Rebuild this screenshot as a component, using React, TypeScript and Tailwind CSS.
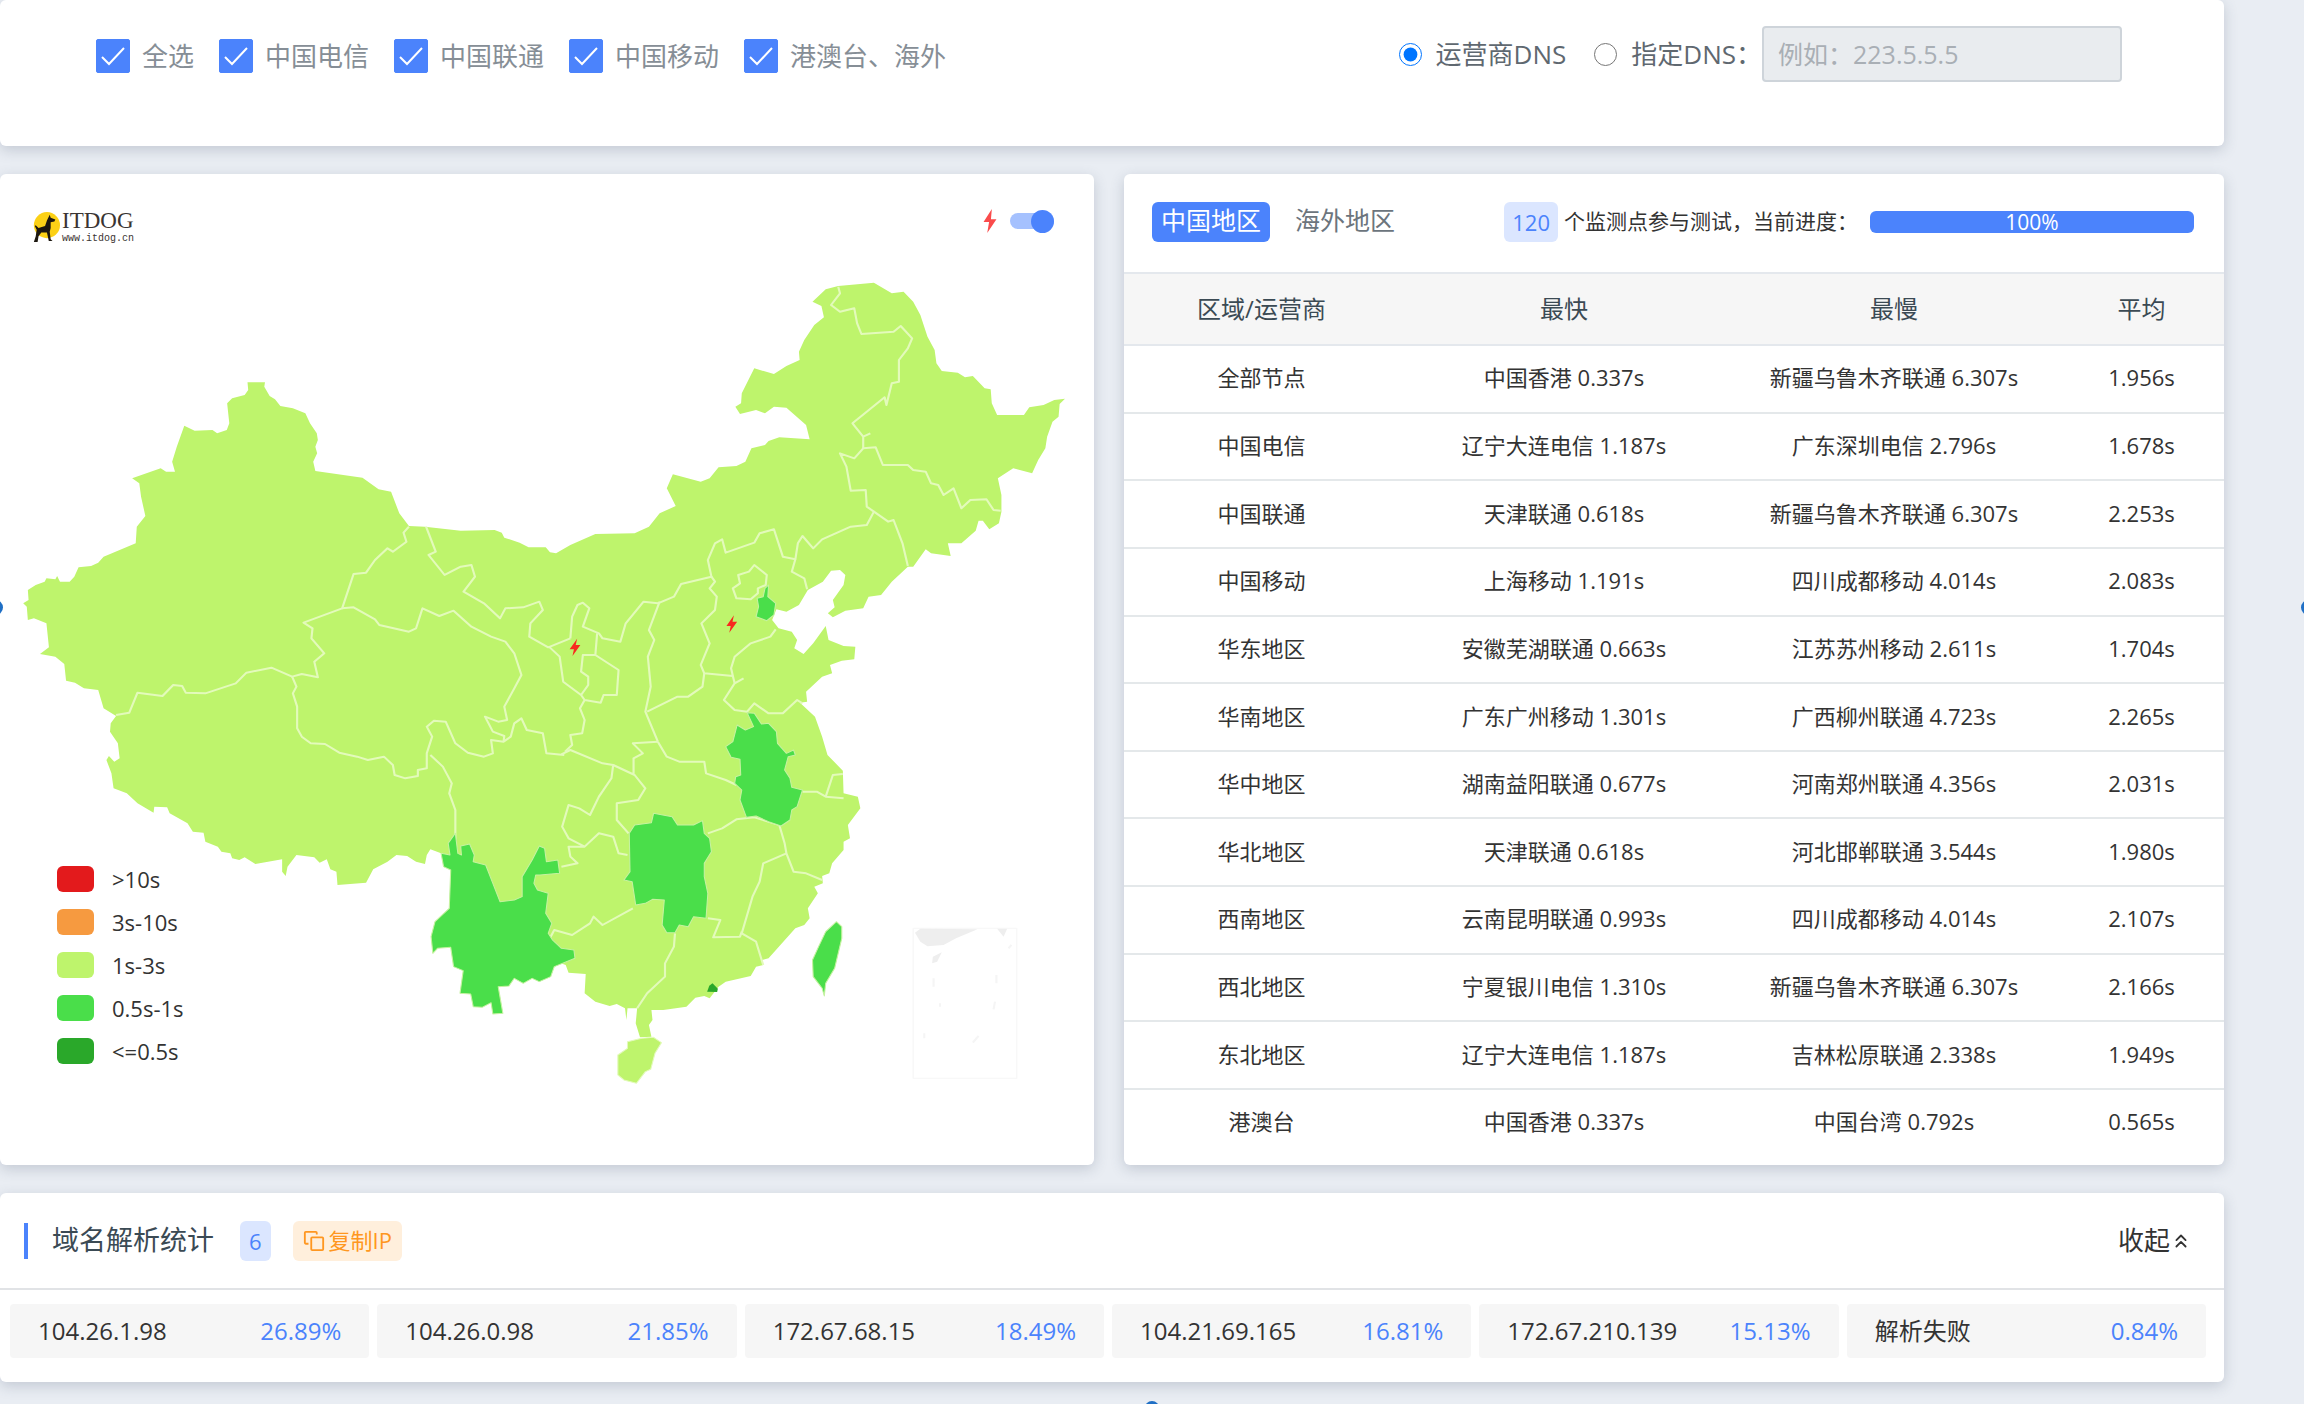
import { useState } from "react";

// Icon
import { ChevronsUp } from "lucide-react";

// ========================================================================================================

const carriers = ["全选", "中国电信", "中国联通", "中国移动", "港澳台、海外"];

const rows = [
  ["全部节点", "中国香港 0.337s", "新疆乌鲁木齐联通 6.307s", "1.956s"],
  ["中国电信", "辽宁大连电信 1.187s", "广东深圳电信 2.796s", "1.678s"],
  ["中国联通", "天津联通 0.618s", "新疆乌鲁木齐联通 6.307s", "2.253s"],
  ["中国移动", "上海移动 1.191s", "四川成都移动 4.014s", "2.083s"],
  ["华东地区", "安徽芜湖联通 0.663s", "江苏苏州移动 2.611s", "1.704s"],
  ["华南地区", "广东广州移动 1.301s", "广西柳州联通 4.723s", "2.265s"],
  ["华中地区", "湖南益阳联通 0.677s", "河南郑州联通 4.356s", "2.031s"],
  ["华北地区", "天津联通 0.618s", "河北邯郸联通 3.544s", "1.980s"],
  ["西南地区", "云南昆明联通 0.993s", "四川成都移动 4.014s", "2.107s"],
  ["西北地区", "宁夏银川电信 1.310s", "新疆乌鲁木齐联通 6.307s", "2.166s"],
  ["东北地区", "辽宁大连电信 1.187s", "吉林松原联通 2.338s", "1.949s"],
  ["港澳台", "中国香港 0.337s", "中国台湾 0.792s", "0.565s"],
];

const legend = [
  { label: ">10s", color: "bg-[#e31a1c]" },
  { label: "3s-10s", color: "bg-[#f69a40]" },
  { label: "1s-3s", color: "bg-[#bef46c]" },
  { label: "0.5s-1s", color: "bg-[#4ade4a]" },
  { label: "<=0.5s", color: "bg-[#2aa82a]" },
];

const results = [
  { ip: "104.26.1.98", percent: "26.89%" },
  { ip: "104.26.0.98", percent: "21.85%" },
  { ip: "172.67.68.15", percent: "18.49%" },
  { ip: "104.21.69.165", percent: "16.81%" },
  { ip: "172.67.210.139", percent: "15.13%" },
  { ip: "解析失败", percent: "0.84%" },
];

const CARD = "bg-white rounded-md shadow-[0_4px_14px_rgba(60,72,100,0.22)]";

// =====================================================
//  Map
// =====================================================
function Bolt({ x, y }: { x: number; y: number }) {
  return (
    <path
      transform={`translate(${x} ${y})`}
      d="M6-26L-15 6H-3L-7 26L15-7H2Z"
      fill="#f8291f"
    />
  );
}

function ChinaMap() {
  return (
    <svg viewBox="0 0 1094 860" className="block w-full" role="img" aria-label="中国地图">
      <g transform="scale(0.35714 0.33333)" strokeLinejoin="round">
        {/* Mainland */}
        <path
          fill="#bef46c"
          d="M65 1030L80 1020 78 990 100 975 125 965 130 955 155 958 160 948 168 965 195 965 208 950 220 922 255 918 275 908 290 890 380 850 383 800 407 768 395 710 390 670 370 655 450 625 465 635 490 635 482 605 495 560 516 497 545 512 595 510 608 520 635 510 642 490 636 430 650 415 685 405 695 390 693 367 742 367 740 380 755 408 770 418 785 438 820 445 855 460 868 490 887 520 890 540 883 560 888 580 877 605 883 633 1015 653 1060 688 1095 695 1118 760 1145 798 1190 800 1290 812 1385 810 1405 818 1412 833 1455 848 1480 862 1528 862 1540 877 1557 880 1597 855 1667 822 1777 820 1817 800 1847 760 1892 738 1867 685 1884 643 1962 665 1987 655 2012 622 2062 618 2087 605 2104 565 2142 555 2152 543 2182 532 2267 538 2257 495 2202 443 2167 440 2142 460 2117 450 2072 462 2059 440 2075 430 2077 400 2112 325 2167 342 2202 318 2239 300 2237 275 2252 240 2280 195 2307 172 2300 138 2275 125 2312 88 2347 78 2447 68 2497 100 2530 95 2557 125 2577 165 2597 230 2617 270 2622 310 2637 333 2682 338 2702 352 2724 348 2757 385 2774 388 2777 430 2792 465 2867 465 2882 442 2922 435 2952 420 2982 416 2967 432 2964 470 2947 485 2932 530 2927 565 2907 600 2890 640 2837 625 2794 655 2804 705 2804 755 2797 790 2770 808 2752 782 2740 782 2732 812 2692 850 2654 850 2662 888 2607 880 2592 868 2557 920 2542 920 2497 965 2467 1005 2432 1010 2417 1045 2367 1052 2332 1072 2318 1060 2337 1042 2332 1020 2362 975 2367 945 2352 930 2327 932 2304 965 2262 990 2237 1035 2202 1055 2174 1048 2162 1080 2180 1105 2217 1115 2232 1140 2224 1165 2250 1182 2277 1150 2312 1098 2320 1140 2362 1158 2395 1160 2392 1198 2357 1202 2324 1215 2330 1240 2302 1250 2257 1295 2260 1325 2240 1328 2282 1370 2302 1430 2317 1485 2360 1532 2362 1600 2402 1610 2409 1645 2374 1695 2380 1735 2362 1745 2362 1770 2330 1810 2322 1840 2302 1848 2304 1870 2280 1880 2290 1900 2262 1945 2267 1975 2252 1995 2227 2005 2152 2095 2134 2100 2137 2115 2117 2120 2102 2148 2032 2165 2012 2180 1987 2215 1972 2208 1947 2213 1922 2240 1857 2250 1824 2250 1827 2280 1817 2295 1824 2330 1792 2332 1780 2290 1784 2245 1757 2245 1754 2280 1750 2245 1727 2232 1707 2238 1667 2225 1637 2200 1640 2142 1592 2138 1584 2115 1545 2100 1262 1940 1262 1830 1235 1780 1205 1768 1195 1785 1190 1812 1165 1805 1140 1788 1110 1785 1085 1805 1045 1828 1025 1868 945 1875 942 1835 925 1828 915 1798 895 1808 880 1792 830 1785 805 1820 800 1848 790 1835 790 1798 715 1812 685 1792 670 1800 650 1795 645 1780 620 1775 610 1760 575 1745 570 1718 540 1715 525 1690 475 1660 468 1642 432 1640 430 1658 385 1630 355 1600 318 1585 312 1540 298 1500 305 1488 320 1505 335 1495 330 1450 308 1415 310 1390 325 1368 290 1345 275 1290 235 1285 210 1268 185 1262 180 1212 155 1190 112 1182 137 1162 130 1090 95 1075 78 1080 75 1040Z"
        />

        {/* North west borders */}
        <g fill="none" stroke="#e3fabb" strokeWidth="6">
          <path d="M1145 800L1130 818 1138 845 1100 875 1085 865 1050 900 1025 938 990 942 958 1045 850 1088 875 1105 872 1135 908 1180 880 1205 890 1252 845 1242 818 1250 760 1223 690 1238 660 1270 575 1300 520 1298 510 1278 485 1275 455 1308 385 1298 362 1358 325 1365" />
          <path d="M818 1250L830 1280 820 1300 832 1340 832 1405 845 1430 870 1450 910 1452 950 1478 1000 1490 1030 1500 1075 1490 1100 1515 1105 1545 1135 1555 1170 1548 1170 1530 1195 1525 1195 1480 1210 1430 1195 1400 1215 1382 1248 1385 1275 1450 1310 1478 1355 1490 1380 1480 1375 1440 1410 1445 1430 1430 1440 1390 1460 1375 1475 1410 1520 1420 1530 1480 1580 1485" />
          <path d="M1410 1445L1412 1428 1380 1415 1358 1370 1395 1385 1420 1380 1412 1340 1440 1285 1460 1245 1440 1180 1415 1145 1375 1130 1320 1100 1270 1052 1230 1068 1183 1045 1165 1105 1145 1115 1062 1095 1050 1078 990 1042 958 1045" />
          <path d="M1193 800L1220 875 1200 885 1245 945 1290 920 1320 915 1330 950 1298 995 1355 1030 1400 1075 1415 1045 1465 1042 1510 1025 1520 1050 1485 1090 1482 1130 1535 1162 1597 1135" />
          <path d="M1205 1485L1240 1520 1265 1570 1258 1600 1275 1650 1275 1740" />
        </g>

        {/* North east borders */}
        <g transform="translate(1512 0)" fill="none" stroke="#e3fabb" strokeWidth="6">
          <path d="M85 1135L90 1070 105 1035 120 1028 138 1045 120 1100 165 1120 175 1135 225 1145 240 1090 290 1025 330 1030 375 1010 395 972 480 950 470 900 490 850 510 838 520 878 600 848 615 820 655 808 680 890 715 898 722 850 735 828 765 865 790 838 870 800 915 795 935 755 915 740 912 690 870 692 858 620 840 580 880 595 905 565 940 562 960 615 1030 615 1045 630 1080 635 1095 670 1115 675 1130 705 1158 685 1180 745 1205 720 1250 718 1270 750 1290 752" />
          <path d="M905 565L905 530 925 520M905 530L875 490 965 412 970 435 985 370 1005 365 1005 300 1030 265 1042 235 1010 198 990 215 900 222 888 190 880 145 840 155 815 135 840 100 835 80" />
          <path d="M935 755L975 785 990 780 1015 850 1030 918M715 898L705 935 740 955 748 988" />
          <path d="M480 950L490 965 475 985 495 1010 490 1050 452 1090 475 1150 450 1215 460 1240 540 1248 535 1225 545 1190 590 1150 645 1130 660 1108" />
          <path d="M600 915L635 945 632 975 610 985 610 1000 590 1018 550 1015 540 985 560 970 555 945 585 935Z" />
          <path d="M335 1025L305 1110 320 1140 302 1190 310 1280 295 1355 330 1445M300 1355L385 1310 415 1310 455 1280 460 1240" />
          <path d="M25 1160L55 1190 65 1265 115 1305 135 1275 135 1250 115 1235 120 1185 155 1185 160 1120M155 1185L220 1230 215 1305 178 1305 170 1328 125 1320 112 1345 125 1380 118 1420 85 1425 90 1455 70 1475M115 1305L125 1320" />
          <path d="M540 1248L545 1270 570 1255M545 1270L515 1320 545 1350 580 1355 600 1330 640 1360 680 1360 720 1320 735 1330" />
        </g>

        {/* Southern borders */}
        <g transform="translate(1512 1320)" fill="none" stroke="#e3fabb" strokeWidth="6">
          <path d="M60 163L85 150 175 190 205 195 200 235 165 290 140 345 110 325 80 315 62 380 80 415 125 440 165 400 205 410 220 460 245 465M125 440L80 440 85 470 105 490 60 500" />
          <path d="M205 195L265 225 295 265 275 300 215 310 215 360 248 400M330 125L260 130 288 160 262 175 262 225" />
          <path d="M330 125L355 170 390 185 460 185 465 220 520 240 550 255M470 400L510 385 550 358 600 352 670 375 685 430 690 460 710 515 745 520 790 540" />
          <path d="M690 460L625 490 615 545 595 590 565 700 605 725 625 795M470 655L505 660 485 712 560 710 565 695" />
          <path d="M378 700L375 740 350 790 350 830 300 880 272 925M25 720L40 690 90 705 140 670 150 650 175 675 260 625" />
          <path d="M735 275L775 275 800 290 850 295M800 290L820 225 848 222" />
        </g>

        {/* Faster provinces */}
        <g fill="#4ade4a" stroke="#c5f2a0" strokeWidth="3">
          <path
            transform="translate(0 1320)"
            d="M1275 400L1282 460 1292 465 1290 438 1315 432 1328 465 1325 485 1360 495 1380 550 1400 605 1440 600 1462 590 1462 530 1490 480 1510 438 1525 445 1530 485 1562 480 1567 520 1512 525 1500 525 1495 550 1505 570 1535 580 1528 640 1545 670 1535 700 1547 720 1572 745 1607 750 1610 775 1552 800 1542 830 1510 845 1490 835 1465 850 1440 835 1425 858 1395 860 1408 940 1380 942 1375 908 1350 922 1325 920 1318 882 1288 880 1297 812 1270 800 1262 742 1225 745 1212 760 1207 710 1218 665 1258 625 1262 510 1242 500 1235 460 1260 465 1255 430Z"
          />
          <g transform="translate(1512 1320)">
            <path d="M250 400L265 375 312 368 318 340 370 350 385 375 430 375 455 362 460 400 475 415 480 455 460 490 460 530 470 580 465 655 430 650 415 680 390 675 378 698 355 698 342 675 348 600 315 598 295 610 268 615 258 545 235 540 252 515Z" />
            <path d="M580 38L600 40 620 72 640 70 662 95 665 130 690 160 710 150 715 165 695 170 685 210 700 235 705 262 735 270 720 320 705 330 700 360 675 378 640 365 605 348 578 352 560 300 565 270 545 250 548 230 562 225 560 178 535 172 520 140 540 125 552 75 575 90 598 80Z" />
            <path d="M830 665L845 680 845 715 825 805 800 850 796 888 790 865 765 830 763 780 780 740 800 695Z" />
          </g>
          <path
            transform="translate(1512 0)"
            d="M630 985L640 975 638 1010 660 1030 655 1065 635 1082 605 1070 612 1040 608 1015 625 1010Z"
          />
        </g>

        {/* Hainan, Hong Kong and the south sea inset */}
        <g transform="translate(1512 1320)">
          <path
            fill="#bef46c"
            stroke="#e3fabb"
            strokeWidth="3"
            d="M245 1025L285 1015 318 1012 340 1028 322 1060 310 1108 295 1115 270 1150 235 1140 218 1125 218 1065 245 1045Z"
          />
          <path fill="#2aa82a" d="M468 875L474 857 483 850 498 866 496 876Z" />
          <rect x="1045" y="685" width="290" height="450" fill="none" stroke="#f8f8f8" strokeWidth="4" />
          <path fill="#eeeeee" d="M1050 698L1065 686 1225 688 1165 715 1130 735 1085 739 1065 725ZM1280 686H1308L1298 710ZM1100 770L1125 757 1112 785 1098 790Z" />
          <path
            stroke="#f5f5f5"
            strokeWidth="6"
            d="M1320 735L1312 745M1278 825V850M1274 905L1270 928M1228 1008L1212 1028M1102 835V860M1120 910V920M1076 1000V1015"
          />
        </g>

        <Bolt x={2049} y={1092} />
        <Bolt x={1610} y={1162} />
      </g>
    </svg>
  );
}

// =====================================================
//  Logo
// =====================================================
function Logo() {
  return (
    <div className="mt-3 flex items-center gap-0.5">
      <svg viewBox="0 0 30 34" className="h-8 w-7">
        <circle cx="16" cy="15" r="14" fill="#fcd116" />
        <path
          fill="#1c1710"
          d="M19 4L20 7 25 9 24 11 20 12 20 18 19 22 20 30 22 32H18L16 23 10 23 7 27 6 33H2L4 27 5 20 3 16 4 15 7 18 14 16 16 10Z"
        />
      </svg>
      <div className="text-[#3a3432]">
        <div className="text-[23px] leading-6 font-['Liberation_Serif',serif]">ITDOG</div>
        <div className="text-[10px] leading-3 font-['Liberation_Mono',monospace]">www.itdog.cn</div>
      </div>
    </div>
  );
}

// ========================================================================================================

export default function App() {
  const [checked, setChecked] = useState(carriers.map(() => true));
  const [dns, setDns] = useState("carrier");
  const [region, setRegion] = useState("中国地区");
  const [lightning, setLightning] = useState(true);

  // =====================================================
  //  Event
  // =====================================================
  const toggleCarrier = (index: number) => {
    if (index === 0) {
      setChecked(checked.map(() => !checked[0]));
      return;
    }
    setChecked(checked.map((value, i) => (i === index ? !value : value)));
  };

  return (
    <div className="relative min-h-screen overflow-hidden bg-[#e9edf3] pr-20 text-[#333] font-['Open_Sans','Noto_Sans_CJK_SC',sans-serif]">
      <div className="flex flex-col gap-7">
        {/* Filters */}
        <section className={`${CARD} flex h-[146px] items-start justify-between pt-[26px] pl-24 pr-[102px]`}>
          <div className="flex h-15 items-center gap-[25px] text-[26px] text-[#868e96]">
            {carriers.map((name, index) => (
              <label key={name} className="flex items-center gap-3">
                <span className="relative h-[34px] w-[34px]">
                  <input
                    type="checkbox"
                    checked={checked[index]}
                    onChange={() => toggleCarrier(index)}
                    className="peer block h-full w-full appearance-none rounded-xs border border-[#4b83fc] checked:bg-[#4b83fc]"
                  />
                  <svg
                    viewBox="0 0 34 34"
                    className="pointer-events-none absolute inset-0 hidden peer-checked:block"
                    fill="none"
                    stroke="white"
                    strokeWidth="2"
                  >
                    <path d="M6 18L13 25 28 9" />
                  </svg>
                </span>
                {name}
              </label>
            ))}
          </div>

          <div className="flex items-center text-[26px] text-[#5f6870]">
            <label className="flex items-center gap-3.5">
              <input
                type="radio"
                name="dns"
                checked={dns === "carrier"}
                onChange={() => setDns("carrier")}
                className="h-[23px] w-[23px] accent-[#0075ff]"
              />
              运营商DNS
            </label>
            <label className="ml-7 flex items-center gap-3.5">
              <input
                type="radio"
                name="dns"
                checked={dns === "custom"}
                onChange={() => setDns("custom")}
                className="h-[23px] w-[23px] accent-[#0075ff]"
              />
              指定DNS：
            </label>
            <input
              type="text"
              aria-label="指定DNS"
              placeholder="例如：223.5.5.5"
              disabled={dns === "carrier"}
              className="h-14 w-[360px] rounded-sm border-2 border-[#ced4da] bg-white px-3.5 text-[25px] placeholder:text-[#a9afb5] disabled:bg-[#e9ecef]"
            />
          </div>
        </section>

        <div className="grid grid-cols-[1094fr_1100fr] gap-[30px]">
          {/* Map */}
          <section className={`${CARD} relative`}>
            <div className="flex h-[86px] items-center justify-between pt-2 pl-8 pr-10">
              <Logo />
              <label className="flex items-center gap-3">
                <svg viewBox="0 0 16 26" className="h-6 w-4" role="img" aria-label="闪电">
                  <path d="M10 0L1 14H7L5 26L15 11H9Z" fill="#fa4b4b" />
                </svg>
                <span className="relative flex h-6 w-11 items-center">
                  <input
                    type="checkbox"
                    role="switch"
                    checked={lightning}
                    onChange={() => setLightning(!lightning)}
                    className="peer h-4 w-full appearance-none rounded-full bg-gray-300 checked:bg-[#a5c1fe]"
                  />
                  <span className="pointer-events-none absolute left-0 h-[23px] w-[23px] rounded-full bg-gray-500 peer-checked:right-0 peer-checked:left-auto peer-checked:bg-[#4b83fc]" />
                </span>
              </label>
            </div>
            <ChinaMap />
            <ul className="absolute bottom-[94px] left-[57px] flex flex-col gap-[3px]">
              {legend.map((item) => (
                <li key={item.label} className="flex h-10 items-center gap-[18px] text-[22px]">
                  <span className={`h-[26px] w-[37px] rounded-md ${item.color}`} />
                  {item.label}
                </li>
              ))}
            </ul>
          </section>

          {/* Region table */}
          <section className={`${CARD} pb-2.5`}>
            <div className="flex h-[98px] items-center pb-[3px] pl-7 pr-[30px] text-[25px]">
              {["中国地区", "海外地区"].map((name) => (
                <button
                  key={name}
                  type="button"
                  onClick={() => setRegion(name)}
                  className={
                    region === name
                      ? "mr-4 h-10 rounded-md bg-[#4b83fc] px-[9px] pb-1 leading-9 text-white"
                      : "mr-4 h-10 px-[9px] pb-1 leading-9 text-[#6c757d]"
                  }
                >
                  {name}
                </button>
              ))}
              <div className="ml-auto flex items-center text-[21px]">
                <span className="h-10 rounded-md bg-[#dbe6ff] px-2 text-[22px] leading-10 text-[#4b83fc]">120</span>
                <span className="mr-3 ml-1.5">个监测点参与测试，当前进度：</span>
                <span className="h-[22px] w-[324px] rounded-md bg-[#4b83fc] text-center leading-[22px] text-white">
                  100%
                </span>
              </div>
            </div>
            <table className="h-[883px] w-full table-fixed text-center text-[22px]">
              <colgroup>
                <col className="w-[25%]" />
                <col className="w-[30%]" />
                <col className="w-[30%]" />
                <col className="w-[15%]" />
              </colgroup>
              <thead>
                <tr className="h-[72px] border-y-2 border-[#e4e8ed] bg-[#f6f6f6] text-2xl text-[#3b4a54]">
                  <th className="font-normal">区域/运营商</th>
                  <th className="font-normal">最快</th>
                  <th className="font-normal">最慢</th>
                  <th className="font-normal">平均</th>
                </tr>
              </thead>
              <tbody>
                {rows.map((row) => (
                  <tr key={row[0]} className="border-b-2 border-[#e4e8ea] last:border-b-0">
                    {row.map((cell, index) => (
                      <td key={index} className="pb-0.5">
                        {cell}
                      </td>
                    ))}
                  </tr>
                ))}
              </tbody>
            </table>
          </section>
        </div>

        {/* Statistics */}
        <section className={CARD}>
          <div className="flex h-[97px] items-center border-b-2 border-[#e1e3e6] pl-6 pr-8">
            <span className="h-9 w-1 bg-[#4b83fc]" />
            <h2 className="ml-6 text-[27px] text-[#3b4a54]">域名解析统计</h2>
            <span className="ml-[26px] h-10 rounded-md bg-[#dbe6ff] px-[9px] text-[22px] leading-10 text-[#4b83fc]">
              6
            </span>
            <button
              type="button"
              className="ml-[22px] flex h-10 items-center gap-1 rounded-md bg-[#ffefdc] px-2.5 text-[22px] text-[#ff9720]"
            >
              <svg viewBox="0 0 24 24" className="h-[22px] w-[22px]" fill="none" stroke="currentColor" strokeWidth="2">
                <rect x="9" y="8" width="13" height="14" rx="1" />
                <path d="M6 15H3Q2 15 2 14V3Q2 2 3 2H14Q15 2 15 3V5" />
              </svg>
              复制IP
            </button>
            <button type="button" className="ml-auto flex items-center text-[26px]">
              收起
              <ChevronsUp className="h-[22px] w-[22px]" strokeWidth={2} />
            </button>
          </div>
          <ul className="grid grid-cols-6 gap-2 pt-[14px] pb-6 pl-2.5 pr-[18px]">
            {results.map((item) => (
              <li
                key={item.ip}
                className="flex h-[54px] items-center justify-between rounded-sm bg-[#f6f6f6] px-7 text-2xl"
              >
                <span>{item.ip}</span>
                <span className="text-[#4b83fc]">{item.percent}</span>
              </li>
            ))}
          </ul>
        </section>
      </div>

      {/* Frame handles */}
      <span className="absolute top-[600px] -left-3 h-[15px] w-[15px] rounded-full bg-[#1f6fc5]" />
      <span className="absolute top-[600px] -right-3 h-[15px] w-[15px] rounded-full bg-[#1f6fc5]" />
      <span className="absolute -bottom-3 left-1/2 h-[15px] w-[15px] -translate-x-1/2 rounded-full bg-[#1f6fc5]" />
    </div>
  );
}
